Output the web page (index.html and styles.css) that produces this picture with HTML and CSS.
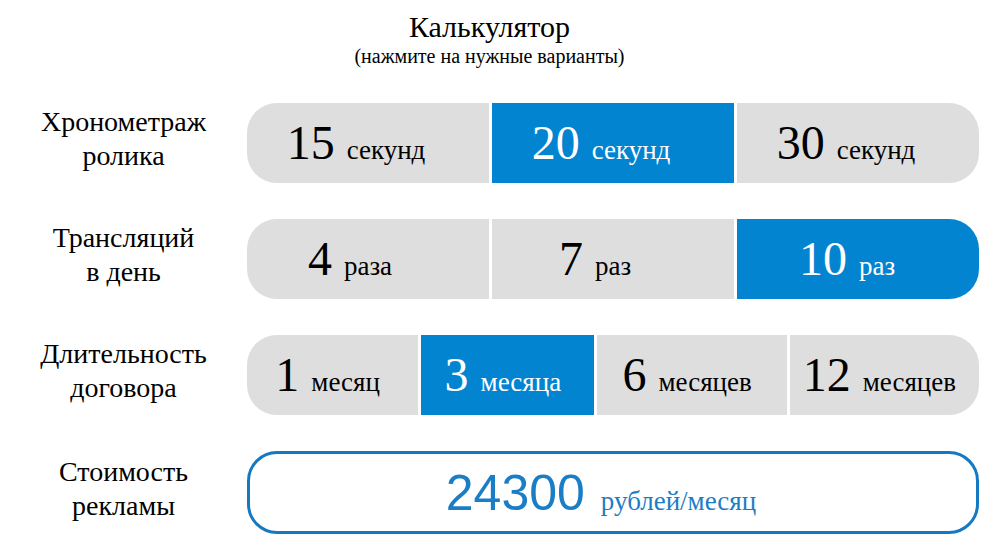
FILE: index.html
```html
<!DOCTYPE html>
<html lang="ru">
<head>
<meta charset="utf-8">
<title>Калькулятор</title>
<link rel="stylesheet" href="styles.css">
</head>
<body>
<div class="calc">
  <div class="head">
    <div class="title">Калькулятор</div>
    <div class="subtitle">(нажмите на нужные варианты)</div>
  </div>
  <div class="rows">
    <div class="label">Хронометраж<br>ролика</div>
    <div class="group cols-3 pad-a">
      <div class="opt"><span class="num">15</span><span class="unit">секунд</span></div>
      <div class="opt active"><span class="num">20</span><span class="unit">секунд</span></div>
      <div class="opt"><span class="num">30</span><span class="unit">секунд</span></div>
    </div>

    <div class="label">Трансляций<br>в день</div>
    <div class="group cols-3 pad-b">
      <div class="opt"><span class="num">4</span><span class="unit">раза</span></div>
      <div class="opt"><span class="num">7</span><span class="unit">раз</span></div>
      <div class="opt active"><span class="num">10</span><span class="unit">раз</span></div>
    </div>

    <div class="label">Длительность<br>договора</div>
    <div class="group cols-4">
      <div class="opt"><span class="num">1</span><span class="unit">месяц</span></div>
      <div class="opt active"><span class="num">3</span><span class="unit">месяца</span></div>
      <div class="opt"><span class="num">6</span><span class="unit">месяцев</span></div>
      <div class="opt"><span class="num">12</span><span class="unit">месяцев</span></div>
    </div>

    <div class="label">Стоимость<br>рекламы</div>
    <div class="result">
      <span class="sum">24300</span><span class="per">рублей/месяц</span>
    </div>
  </div>
</div>
</body>
</html>
```
FILE: styles.css
```css
html, body {
  margin: 0;
  padding: 0;
  background: #ffffff;
}
body {
  font-family: "Liberation Serif", "Times New Roman", serif;
  color: #000000;
}
.calc {
  width: 979px;
}
.head {
  padding-top: 12px;
  text-align: center;
}
.title {
  font-size: 30px;
  line-height: 30px;
}
.subtitle {
  font-size: 20px;
  line-height: 22px;
  margin-top: 3px;
}
.rows {
  margin-top: 36px;
  display: grid;
  grid-template-columns: 247px 732px;
  grid-template-rows: 80px 80px 80px 83px;
  row-gap: 36px;
}
.label {
  font-size: 28px;
  line-height: 34px;
  text-align: center;
  align-self: center;
  padding-bottom: 8px;
}
.group {
  display: grid;
  column-gap: 3px;
  border-radius: 30px;
  overflow: hidden;
}
.cols-3 {
  grid-template-columns: 1fr 1fr 1fr;
}
.cols-4 {
  grid-template-columns: 171fr 173fr 189fr 189fr;
}
.opt {
  background: #dedede;
  display: flex;
  align-items: baseline;
  justify-content: center;
  padding-top: 12px;
  box-sizing: border-box;
  white-space: nowrap;
}
.pad-a .opt {
  padding-right: 24px;
}
.pad-b .opt {
  padding-right: 36px;
}
.pad-b .opt.active {
  padding-right: 22px;
}
.cols-4 .opt {
  padding-right: 10px;
}
.opt.active {
  background: #0284d1;
  color: #ffffff;
}
.num {
  font-size: 48px;
  line-height: 56px;
  margin-right: 12px;
}
.unit {
  font-size: 27px;
}
.result {
  border: 3px solid #1479c2;
  border-radius: 30px;
  box-sizing: border-box;
  display: flex;
  align-items: baseline;
  justify-content: center;
  padding-right: 24px;
  padding-top: 8px;
  color: #1b7dc6;
}
.sum {
  font-family: "Liberation Sans", Arial, sans-serif;
  font-size: 50px;
  line-height: 62px;
  margin-right: 16px;
}
.per {
  font-size: 27px;
}
```
